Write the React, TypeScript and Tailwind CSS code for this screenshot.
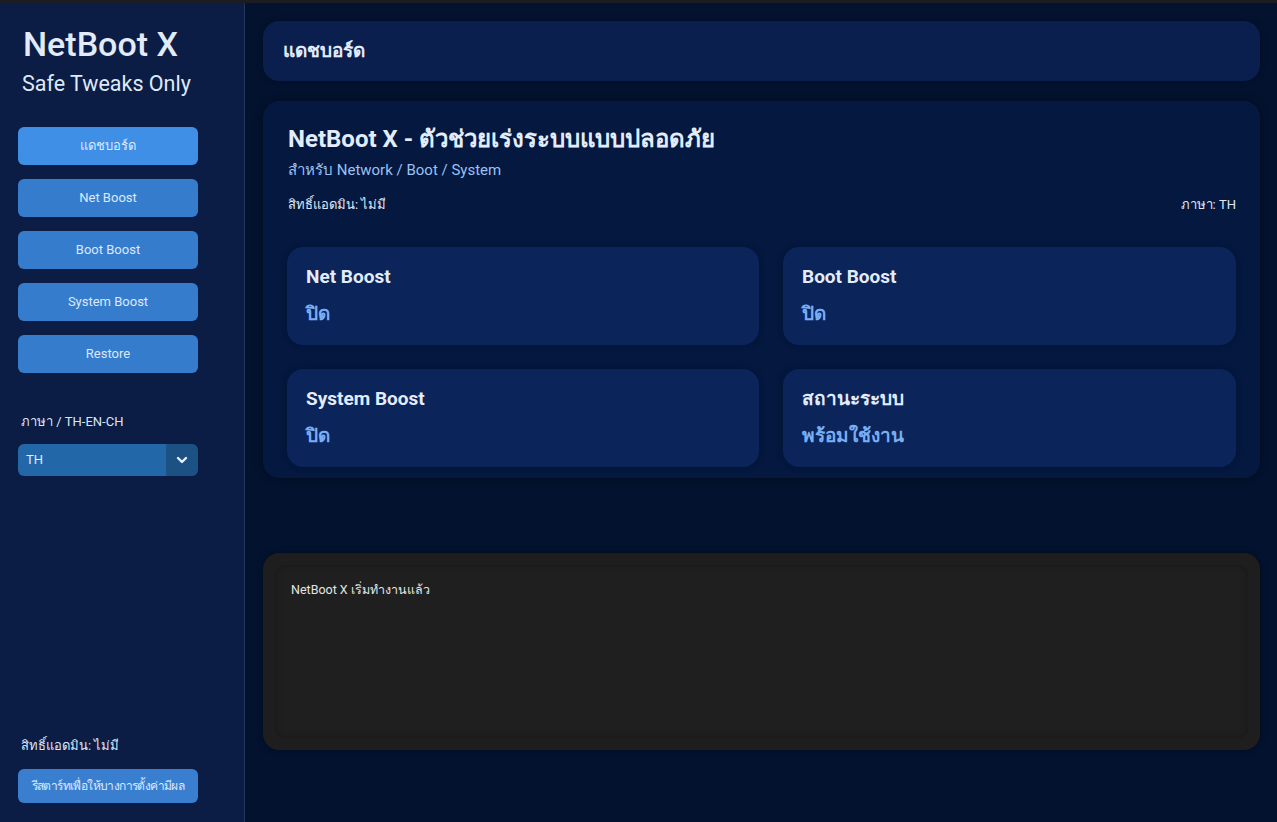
import React from "react";

const font = { fontFamily: 'Roboto, "Noto Sans", "DejaVu Sans", sans-serif' };

function SideBtn({ label, active }: { label: string; active?: boolean }) {
  return (
    <button
      className={
        "h-[38px] w-[180px] rounded-[6px] text-[13px] text-[#dbe8ff] " +
        (active ? "bg-[#3f8fe6]" : "bg-[#367ccc]")
      }
    >
      {label}
    </button>
  );
}

function StatCard({ title, value }: { title: string; value: string }) {
  return (
    <div className="h-[98px] rounded-[16px] bg-[#0b2459] px-[19px] pt-[18px] shadow-[0_0_6px_rgba(0,0,0,0.25)]">
      <div className="text-[19px] font-bold leading-[24px] text-[#e3ecfb]">{title}</div>
      <div className="mt-[13px] text-[19px] font-bold leading-[24px] text-[#78aef3]">{value}</div>
    </div>
  );
}

export default function App() {
  return (
    <div className="flex h-[822px] w-[1277px] flex-col overflow-hidden bg-[#03122f]" style={font}>
      <div className="h-[3px] bg-[#1b1d22]" />
      <div className="flex flex-1">
        <aside className="flex w-[245px] flex-col border-r border-[#22375a] bg-[#0b1c45] pl-[18px]">
          <div className="pt-[20px] pl-[5px] text-[34px] font-medium leading-[42px] text-[#e2ebf9]">NetBoot X</div>
          <div className="pl-[4px] pt-[4px] text-[21.5px] leading-[30px] text-[#dfe9f8]">Safe Tweaks Only</div>
          <div className="mt-[28px] flex flex-col gap-[14px]">
            <SideBtn label="แดชบอร์ด" active />
            <SideBtn label="Net Boost" />
            <SideBtn label="Boot Boost" />
            <SideBtn label="System Boost" />
            <SideBtn label="Restore" />
          </div>
          <div className="mt-[40px] pl-[3px] text-[13px] leading-[18px] text-[#dbe6f7]">ภาษา / TH-EN-CH</div>
          <div className="mt-[13px] flex h-[32px] w-[180px] overflow-hidden rounded-[6px]">
            <div className="flex flex-1 items-center bg-[#2268a9] pl-[8px] text-[13px] text-[#e0ecfb]">TH</div>
            <div className="flex w-[32px] items-center justify-center bg-[#1c5184]">
              <svg width="12" height="8" viewBox="0 0 12 8">
                <path d="M2 2 L6 6 L10 2" stroke="#e6f0ff" strokeWidth="2.4" fill="none" strokeLinecap="round" strokeLinejoin="round" />
              </svg>
            </div>
          </div>
          <div className="flex-1" />
          <div className="pl-[3px] text-[13px] leading-[18px] text-[#dbe6f7]">สิทธิ์แอดมิน: ไม่มี</div>
          <button className="mt-[14px] mb-[19px] h-[34px] w-[180px] whitespace-nowrap rounded-[6px] bg-[#3a7fcf] text-[12px] tracking-[-0.6px] text-[#dbe8ff]">
            รีสตาร์ทเพื่อให้บางการตั้งค่ามีผล
          </button>
        </aside>
        <main className="flex flex-1 flex-col pl-[18px] pr-[17px] pt-[18px]">
          <div className="flex h-[60px] items-center rounded-[16px] bg-[#0a1f4e] pl-[20px] text-[19px] font-bold text-[#e3ecfb] shadow-[0_0_6px_rgba(0,0,0,0.3)]">
            แดชบอร์ด
          </div>
          <section className="mt-[20px] h-[377px] rounded-[16px] bg-[#041840] px-[24px] pt-[23px] shadow-[0_0_8px_rgba(0,0,0,0.35)]">
            <div className="pl-[1px] text-[24px] font-bold leading-[30px] text-[#e3ecfb]">
              NetBoot X - ตัวช่วยเร่งระบบแบบปลอดภัย
            </div>
            <div className="mt-[6px] pl-[1px] text-[15px] leading-[20px] text-[#9cc0f2]">สำหรับ Network / Boot / System</div>
            <div className="mt-[16px] flex justify-between pl-[1px] text-[13px] leading-[18px] text-[#e0e8f5]">
              <span>สิทธิ์แอดมิน: ไม่มี</span>
              <span>ภาษา: TH</span>
            </div>
            <div className="mt-[33px] grid grid-cols-[472px_1fr] gap-x-[24px] gap-y-[24px]">
              <StatCard title="Net Boost" value="ปิด" />
              <StatCard title="Boot Boost" value="ปิด" />
              <StatCard title="System Boost" value="ปิด" />
              <StatCard title="สถานะระบบ" value="พร้อมใช้งาน" />
            </div>
          </section>
          <section className="mt-[75px] h-[197px] rounded-[16px] bg-[#1e1e1e] p-[12px] shadow-[0_0_6px_rgba(0,0,0,0.4)]">
            <div className="h-full rounded-[10px] bg-[#1f1f1f] px-[16px] pt-[16px] text-[12.5px] leading-[18px] text-[#e4e4e4] shadow-[inset_0_0_6px_rgba(0,0,0,0.25)]">
              NetBoot X เริ่มทำงานแล้ว
            </div>
          </section>
        </main>
      </div>
    </div>
  );
}
